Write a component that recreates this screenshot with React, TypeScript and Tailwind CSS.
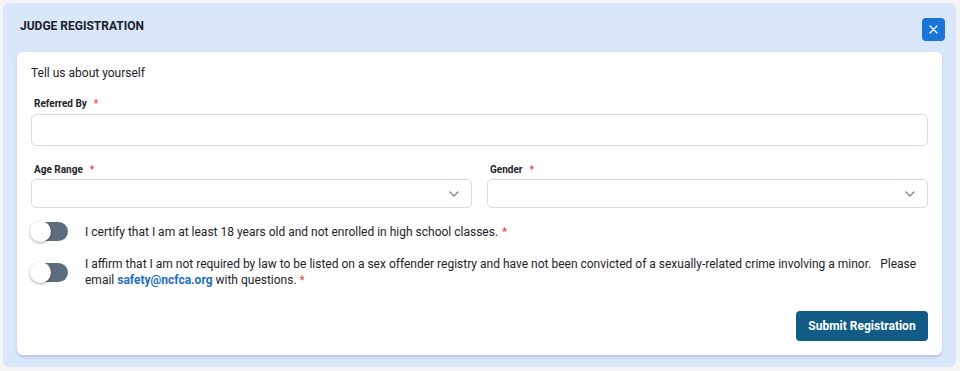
import React from "react";

function Toggle() {
  return (
    <div className="relative w-[37px] h-[19px] shrink-0">
      <div className="absolute inset-0 rounded-full bg-[#5d6d7c]" />
      <div className="absolute left-[-1px] top-[-1px] w-[21px] h-[21px] rounded-full bg-white shadow-[0_1px_3px_rgba(0,0,0,0.35)]" />
    </div>
  );
}

function Chevron() {
  return (
    <svg width="10" height="6" viewBox="0 0 10 6" fill="none">
      <path d="M1 1l4 4 4-4" stroke="#7a8290" strokeWidth="1.2" strokeLinecap="round" strokeLinejoin="round" />
    </svg>
  );
}

function Label({ text }: { text: string }) {
  return (
    <div className="pl-[3px] text-[10px] font-bold text-[#1d232a] leading-[14px]">
      {text}
      <span className="text-[#e5484d] ml-[7px]">*</span>
    </div>
  );
}

export default function App() {
  return (
    <div className="w-[960px] h-[371px] bg-[#f4f5f7] p-[3px] pb-[4px]" style={{ fontFamily: "Roboto, 'Liberation Sans', sans-serif" }}>
      <div className="h-[364px] w-[953px] rounded-[6px] bg-[#dae7fb] px-[14px] pb-[12px] flex flex-col">
        <div className="h-[49px] flex items-start justify-between pt-[15px]">
          <div className="pl-[3px] mt-[1px] text-[12px] leading-[14px] font-bold text-[#1b2128]">JUDGE REGISTRATION</div>
          <button className="mr-[-3px] w-[23px] h-[23px] rounded-[4px] bg-[#1874d6] flex items-center justify-center">
            <svg width="9" height="9" viewBox="0 0 9 9">
              <path d="M1 1l7 7M8 1l-7 7" stroke="white" strokeWidth="1.3" strokeLinecap="round" />
            </svg>
          </button>
        </div>
        <div className="flex-1 bg-white rounded-[6px] shadow-[0_2px_3px_rgba(90,120,170,0.3)] px-[14px] pt-[13px] pb-[14px] flex flex-col text-[#1d232a]">
          <div className="text-[12px] leading-[16px]">Tell us about yourself</div>
          <div className="mt-[16px]">
            <Label text="Referred By" />
          </div>
          <div className="mt-[3px] h-[32px] rounded-[5px] border border-[#d7dde6] bg-white" />
          <div className="mt-[17px] grid grid-cols-2 gap-[15px]">
            <div className="flex flex-col">
              <Label text="Age Range" />
              <div className="mt-[2px] h-[29px] rounded-[5px] border border-[#d7dde6] flex items-center justify-end pr-[12px]">
                <Chevron />
              </div>
            </div>
            <div className="flex flex-col">
              <Label text="Gender" />
              <div className="mt-[2px] h-[29px] rounded-[5px] border border-[#d7dde6] flex items-center justify-end pr-[12px]">
                <Chevron />
              </div>
            </div>
          </div>
          <div className="mt-[14px] flex items-center gap-[17px]">
            <Toggle />
            <div className="text-[12px] leading-[16px]">
              I certify that I am at least 18 years old and not enrolled in high school classes.
              <span className="text-[#e5484d] ml-[4px]">*</span>
            </div>
          </div>
          <div className="mt-[15px] flex items-center gap-[17px]">
            <Toggle />
            <p className="text-[12px] leading-[16px]">
              I affirm that I am not required by law to be listed on a sex offender registry and have not been convicted of a sexually-related crime involving a minor.&nbsp;&nbsp; Please email <b className="font-bold text-[#1e6fc0]">safety@ncfca.org</b> with questions. <span className="text-[#e5484d]">*</span>
            </p>
          </div>
          <div className="mt-auto flex justify-end">
            <button className="w-[132px] h-[30px] rounded-[4px] bg-[#125b87] text-white text-[12px] font-bold">
              Submit Registration
            </button>
          </div>
        </div>
      </div>
    </div>
  );
}
